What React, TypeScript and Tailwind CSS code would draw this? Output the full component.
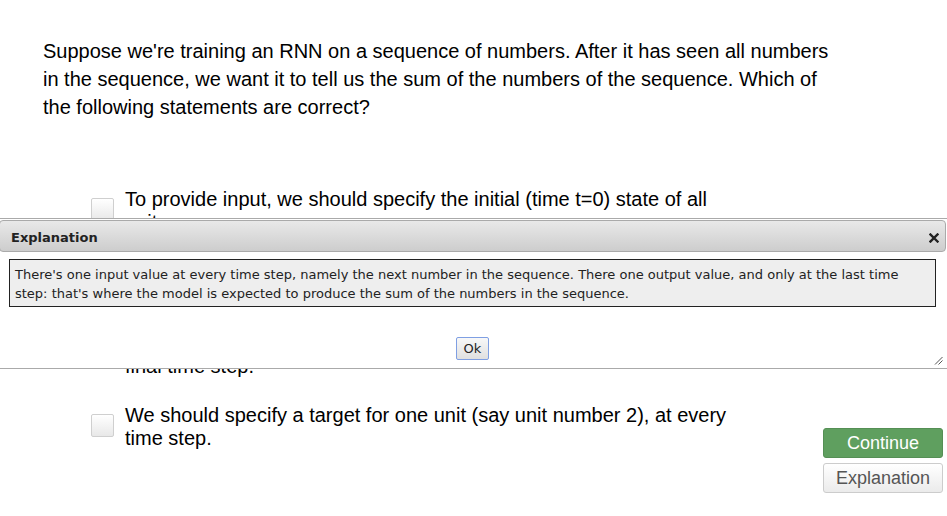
import React from "react";

const OPTIONS: string[][] = [
  ["To provide input, we should specify the initial (time t=0) state of all", "units."],
  ["To provide input, we should specify the state of one unit (say unit", "number 1) at every time step."],
  ["We should specify a target for one unit (say unit number 2), only at the", "final time step."],
  ["We should specify a target for one unit (say unit number 2), at every", "time step."],
];

function Checkbox() {
  return (
    <span className="mt-[10px] block h-[23px] w-[23px] shrink-0 rounded-[2px] border border-[#cfcfcf] bg-gradient-to-b from-[#ffffff] to-[#e8e8e8]" />
  );
}

function CloseIcon() {
  return (
    <svg width="10" height="10" viewBox="0 0 10 10" aria-hidden>
      <path d="M1.5 1.5 L8.5 8.5 M8.5 1.5 L1.5 8.5" stroke="#222" strokeWidth="2.4" strokeLinecap="square" />
    </svg>
  );
}

function ResizeHandle() {
  return (
    <svg width="9" height="9" viewBox="0 0 9 9" className="absolute bottom-[3px] right-[4px]" aria-hidden>
      <path d="M1 8.5 L8.5 1 M4.5 8.5 L8.5 4.5" stroke="#555" strokeWidth="1" />
    </svg>
  );
}

export default function App() {
  return (
    <div className="relative h-[516px] w-[947px] overflow-hidden bg-white font-['Liberation_Sans',Arial,sans-serif] text-black">
      <div className="pl-[43px] pt-[37px] text-[20px] leading-[28px]">
        <span className="block">Suppose we're training an RNN on a sequence of numbers. After it has seen all numbers</span>
        <span className="block">in the sequence, we want it to tell us the sum of the numbers of the sequence. Which of</span>
        <span className="block">the following statements are correct?</span>
      </div>

      <div className="mt-[67px] flex">
        <ul className="flex flex-1 flex-col gap-[26px] pl-[91px]">
          {OPTIONS.map((lines, i) => (
            <li key={i} className="flex gap-[11px]">
              <Checkbox />
              <div className="text-[20px] leading-[23px]">
                {lines.map((l, j) => (
                  <span key={j} className="block">{l}</span>
                ))}
              </div>
            </li>
          ))}
        </ul>
        <div className="mr-[4px] mt-[240px] flex w-[120px] flex-col gap-[5px]">
          <button className="h-[30px] rounded-[3px] border border-[#558f55] bg-[#5f9f5f] text-[18px] leading-[28px] text-white">
            Continue
          </button>
          <button className="h-[30px] rounded-[3px] border border-[#cccccc] bg-gradient-to-b from-[#ffffff] to-[#ebebeb] text-[18px] leading-[28px] text-[#555]">
            Explanation
          </button>
        </div>
      </div>

      {/* modal dialog lying over the quiz */}
      <div className="absolute left-[-3px] top-[218px] h-[151px] w-[951px] border border-[#aaaaaa] bg-white p-[1px] font-['DejaVu_Sans',Verdana,sans-serif]">
        <div className="flex h-[32px] items-center justify-between rounded-[4px] border border-[#aaaaaa] bg-gradient-to-b from-[#e9e9e9] to-[#cdcdcd] pl-[11px] pr-[6px] pt-[3px]">
          <span className="text-[13px] font-bold text-[#222]">Explanation</span>
          <CloseIcon />
        </div>
        <div className="mx-[10px] mt-[7px] border border-[#222] bg-[#eeeeee] px-[5px] pb-[3px] pt-[5px] text-[13px] leading-[19px] text-[#222]">
          There's one input value at every time step, namely the next number in the sequence. There one output value, and only at the last time step: that's where the model is expected to produce the sum of the numbers in the sequence.
        </div>
        <div className="mt-[30px] flex justify-center">
          <button className="h-[23px] rounded-[2px] border border-[#7f9fe3] bg-gradient-to-b from-[#f8f8f8] to-[#e0e0e0] px-[7px] text-[13px] leading-[20px] text-[#222]">
            Ok
          </button>
        </div>
        <ResizeHandle />
      </div>
    </div>
  );
}
